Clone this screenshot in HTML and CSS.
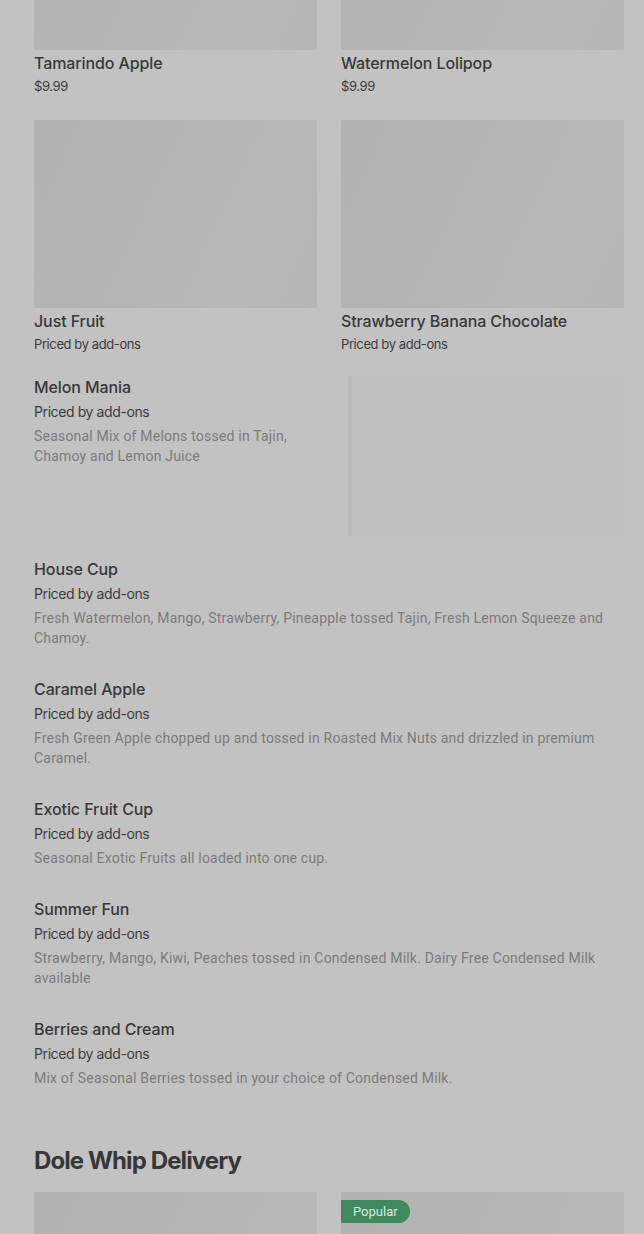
FILE: index.html
```html
<!DOCTYPE html>
<html lang="en">
<head>
<meta charset="utf-8">
<title>Menu</title>
<link rel="stylesheet" href="styles.css">
</head>
<body>
<main class="menu">
  <section class="grid">
    <div class="card">
      <div class="thumb"></div>
      <h3 class="name">Tamarindo Apple</h3>
      <p class="price">$9.99</p>
    </div>
    <div class="card">
      <div class="thumb"></div>
      <h3 class="name">Watermelon Lolipop</h3>
      <p class="price">$9.99</p>
    </div>
    <div class="card">
      <div class="thumb"></div>
      <h3 class="name">Just Fruit</h3>
      <p class="price">Priced by add-ons</p>
    </div>
    <div class="card">
      <div class="thumb"></div>
      <h3 class="name">Strawberry Banana Chocolate</h3>
      <p class="price">Priced by add-ons</p>
    </div>
  </section>

  <section class="feature">
    <div class="item">
      <h3 class="name">Melon Mania</h3>
      <p class="price">Priced by add-ons</p>
      <p class="desc">Seasonal Mix of Melons tossed in Tajin, Chamoy and Lemon Juice</p>
    </div>
    <div class="feature-pic"></div>
  </section>

  <section class="list">
    <div class="item">
      <h3 class="name">House Cup</h3>
      <p class="price">Priced by add-ons</p>
      <p class="desc">Fresh Watermelon, Mango, Strawberry, Pineapple tossed Tajin, Fresh Lemon Squeeze and Chamoy.</p>
    </div>
    <div class="item">
      <h3 class="name">Caramel Apple</h3>
      <p class="price">Priced by add-ons</p>
      <p class="desc">Fresh Green Apple chopped up and tossed in Roasted Mix Nuts and drizzled in premium Caramel.</p>
    </div>
    <div class="item">
      <h3 class="name">Exotic Fruit Cup</h3>
      <p class="price">Priced by add-ons</p>
      <p class="desc">Seasonal Exotic Fruits all loaded into one cup.</p>
    </div>
    <div class="item">
      <h3 class="name">Summer Fun</h3>
      <p class="price">Priced by add-ons</p>
      <p class="desc">Strawberry, Mango, Kiwi, Peaches tossed in Condensed Milk. Dairy Free Condensed Milk available</p>
    </div>
    <div class="item">
      <h3 class="name">Berries and Cream</h3>
      <p class="price">Priced by add-ons</p>
      <p class="desc">Mix of Seasonal Berries tossed in your choice of Condensed Milk.</p>
    </div>
  </section>

  <h2 class="section-title">Dole Whip Delivery</h2>

  <section class="grid">
    <div class="card">
      <div class="thumb"></div>
    </div>
    <div class="card">
      <div class="thumb">
        <span class="badge">Popular</span>
      </div>
    </div>
  </section>
</main>
</body>
</html>
```

FILE: styles.css
```css
* { box-sizing: border-box; }

html, body {
  margin: 0;
  padding: 0;
  background: #c2c2c2;
  overflow: hidden;
}

body {
  font-family: "Inter", "Roboto", "Liberation Sans", sans-serif;
  color: #3a3a3a;
}

.menu {
  padding: 0 20px 0 34px;
  margin-top: -138px;
}

h2, h3, p { margin: 0; }

.grid {
  display: grid;
  grid-template-columns: 1fr 1fr;
  column-gap: 24px;
  row-gap: 24px;
}

.thumb {
  position: relative;
  height: 188px;
  background: linear-gradient(115deg, #b2b2b2 0%, #b4b4b4 45%, #b8b8b8 75%, #b5b5b5 100%);
  border-radius: 2px;
}

.name {
  font-size: 16px;
  font-weight: 500;
  line-height: 24px;
  color: #383838;
  letter-spacing: -0.1px;
}

.card .name { margin-top: 1px; }

.price {
  font-size: 14px;
  line-height: 20px;
  color: #3c3c3c;
  margin-top: 3px;
  letter-spacing: -0.4px;
}

.card .price {
  font-size: 13px;
  margin-top: 1px;
}

.desc {
  font-family: "Roboto", "Inter", sans-serif;
  font-size: 14px;
  line-height: 20px;
  color: #7b7b7b;
  margin-top: 4px;
  letter-spacing: 0.2px;
}

.feature {
  display: grid;
  grid-template-columns: 1fr 276px;
  column-gap: 24px;
  margin-top: 21px;
}

.feature-pic {
  height: 160px;
  margin-top: 1px;
  background: #bfbfbf;
  border-left: 4px solid #bbbbbb;
}

.list {
  margin-top: 21px;
  display: flex;
  flex-direction: column;
  gap: 29px;
}

.section-title {
  margin-top: 57px;
  font-size: 24px;
  line-height: 32px;
  font-weight: 700;
  letter-spacing: -0.9px;
  color: #373737;
}

.section-title + .grid { margin-top: 15px; }

.badge {
  position: absolute;
  left: 0;
  top: 8px;
  height: 23px;
  padding: 0 12px;
  display: flex;
  align-items: center;
  background: #3f8a5d;
  color: #d9ebe0;
  font-family: "Roboto", sans-serif;
  font-size: 13px;
  border-radius: 0 12px 12px 0;
}
```
